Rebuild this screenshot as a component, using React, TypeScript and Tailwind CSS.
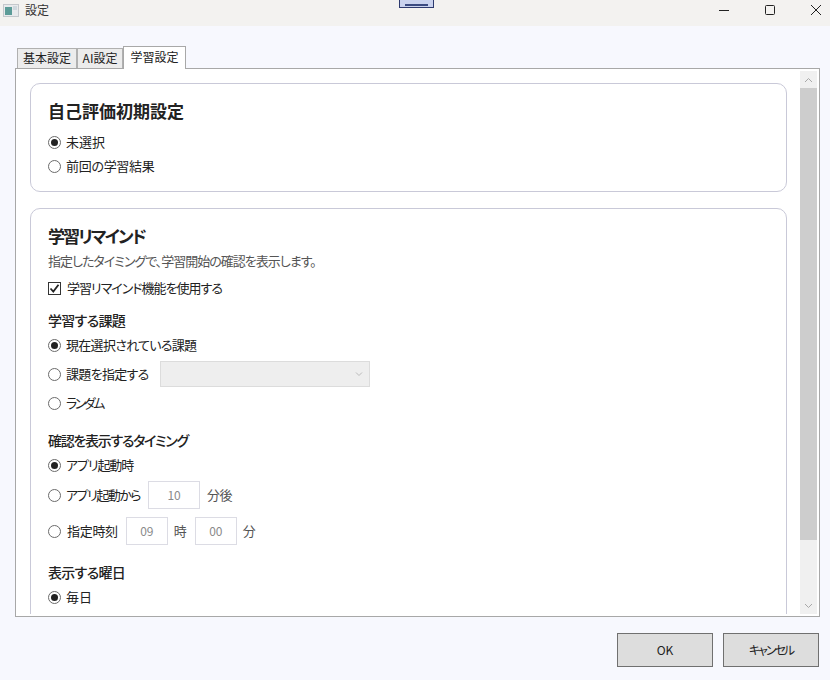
import React from 'react';

const font = { fontFamily: '"Noto Sans CJK JP", "Noto Sans", sans-serif' };

function Radio({ checked = false }: { checked?: boolean }) {
  return (
    <span className="flex h-[13px] w-[13px] shrink-0 items-center justify-center rounded-full border border-[#6b6b6b] bg-white">
      {checked && <span className="h-[7px] w-[7px] rounded-full bg-[#222]" />}
    </span>
  );
}

function Box({ value, w }: { value: string; w: string }) {
  return (
    <span className={`flex h-[28px] items-center justify-center border border-[#dcdce4] bg-white text-[12px] text-[#8a8a8a] ${w}`}>
      {value}
    </span>
  );
}

function Tab({ label, active = false, w }: { label: string; active?: boolean; w: string }) {
  return active ? (
    <div className={`relative z-10 -mb-px flex h-[23px] items-center justify-center border border-b-0 border-[#a8a8a8] bg-white pb-[2px] text-[12px] text-[#222] ${w}`}>
      {label}
    </div>
  ) : (
    <div className={`flex h-[20px] items-center justify-center border border-b-0 border-[#b0b0b0] bg-[#ececec] pb-[1px] text-[12px] text-[#222] ${w}`}>
      {label}
    </div>
  );
}

export default function App() {
  return (
    <div className="relative flex h-[680px] w-[830px] flex-col overflow-hidden bg-[#f7f8fe] text-[#222] [font-feature-settings:'palt']" style={font}>
      {/* Title bar */}
      <div className="flex h-[26px] shrink-0 items-center bg-[#f3f2f0] pb-[6px] pl-[3px] pr-[8px]">
        <svg width="16" height="13" viewBox="0 0 16 13" className="shrink-0">
          <rect x="0.5" y="0.5" width="15" height="12" fill="#e8eaec" stroke="#c4c8cc" />
          <rect x="2" y="3" width="7" height="8" fill="#5c9c98" />
          <rect x="10" y="2" width="4" height="4" fill="#cfd8de" />
        </svg>
        <span className="ml-[6px] text-[12px] text-[#333]">設定</span>
        <div className="ml-auto flex items-center gap-[34px]">
          <svg width="12" height="12" viewBox="0 0 12 12"><path d="M1 6.5h10" stroke="#222" strokeWidth="1" /></svg>
          <svg width="12" height="12" viewBox="0 0 12 12" fill="none"><rect x="1.5" y="1.5" width="9" height="9" rx="1" stroke="#222" /></svg>
          <svg width="12" height="12" viewBox="0 0 12 12" fill="none"><path d="M1 1l10 10M11 1L1 11" stroke="#222" /></svg>
        </div>
      </div>

      {/* Window sliver at top */}
      <div className="absolute left-[399px] top-0 flex h-[8px] w-[35px] items-end border border-t-0 border-[#2d3a6e] bg-[#c9d2ee] px-[5px] pb-[1px]">
        <div className="h-[2px] w-full bg-[#3a4a80]" />
      </div>

      {/* Tabs */}
      <div className="mt-[20px] flex items-end pl-[17px]">
        <Tab label="基本設定" w="w-[60px]" />
        <Tab label="AI設定" w="w-[46px]" />
        <Tab label="学習設定" active w="w-[63px]" />
      </div>

      {/* Panel */}
      <div className="mx-[15px] flex h-[549px] w-[805px] border border-[#a8a8a8] bg-white pb-[2px] pl-[14px] pr-[2px] pt-[2px]">
        <div className="flex min-w-0 flex-1 flex-col gap-[16px] overflow-hidden pt-[12px]">
          <section className="h-[109px] w-[757px] shrink-0 rounded-[10px] border border-[#c9c9d8] px-[17px] pt-[15px]">
            <h2 className="text-[17px] font-bold leading-[24px] text-[#222]">自己評価初期設定</h2>
            <div className="mt-[7px] flex items-center gap-[5px] text-[13px] leading-[24px]"><Radio checked />未選択</div>
            <div className="flex items-center gap-[5px] text-[13px] leading-[24px] tracking-[-0.3px]"><Radio />前回の学習結果</div>
          </section>

          <section className="w-[757px] shrink-0 rounded-[10px] border border-[#c9c9d8] px-[17px] pt-[15px]">
            <h2 className="text-[17px] font-bold leading-[24px] tracking-[-1.9px]">学習リマインド</h2>
            <p className="mt-[4px] text-[13px] leading-[18px] tracking-[-1px] text-[#555]">指定したタイミングで、学習開始の確認を表示します。</p>
            <div className="mt-[9px] flex h-[18px] items-center gap-[6px] text-[13px] tracking-[-1px]">
              <span className="flex h-[13px] w-[13px] items-center justify-center border border-[#333] bg-white">
                <svg width="11" height="11" viewBox="0 0 11 11" fill="none"><path d="M1.5 5.5l2.8 3L9.5 1.8" stroke="#222" strokeWidth="1.8" /></svg>
              </span>
              学習リマインド機能を使用する
            </div>

            <h3 className="mt-[14px] text-[14px] font-medium leading-[18px] tracking-[-0.7px]">学習する課題</h3>
            <div className="mt-[7px] flex h-[18px] items-center gap-[5px] text-[13px] tracking-[-0.7px]"><Radio checked />現在選択されている課題</div>
            <div className="mt-[7px] flex h-[26px] items-center gap-[5px] text-[13px] tracking-[-0.7px]">
              <Radio />課題を指定する
              <span className="ml-[6px] flex h-[26px] w-[210px] items-center justify-end border border-[#dcdcdc] bg-[#eeeeee] pr-[6px]">
                <svg width="8" height="6" viewBox="0 0 8 6" fill="none"><path d="M1 1.5l3 3 3-3" stroke="#bbb" /></svg>
              </span>
            </div>
            <div className="mt-[7px] flex h-[18px] items-center gap-[5px] text-[13px] tracking-[-2.5px]"><Radio />ランダム</div>

            <h3 className="mt-[19px] text-[14px] font-medium leading-[18px] tracking-[-1.3px]">確認を表示するタイミング</h3>
            <div className="mt-[7px] flex h-[18px] items-center gap-[5px] text-[13px] tracking-[-1.1px]"><Radio checked />アプリ起動時</div>
            <div className="mt-[7px] flex h-[28px] items-center gap-[5px] text-[13px]">
              <Radio />
              <span className="tracking-[-1.5px]">アプリ起動から</span>
              <Box value="10" w="ml-[3px] w-[52px]" />
              <span className="ml-[2px] tracking-[-0.5px] text-[#555]">分後</span>
            </div>
            <div className="mt-[8px] flex h-[28px] items-center gap-[6px] text-[13px]">
              <Radio />
              <span className="tracking-[-0.3px]">指定時刻</span>
              <Box value="09" w="ml-[2px] w-[42px]" />
              <span className="text-[#555]">時</span>
              <Box value="00" w="ml-[2px] w-[42px]" />
              <span className="text-[#555]">分</span>
            </div>

            <h3 className="mt-[18px] text-[14px] font-medium leading-[18px] tracking-[-0.7px]">表示する曜日</h3>
            <div className="mt-[7px] flex h-[18px] items-center gap-[5px] text-[13px]"><Radio checked />毎日</div>
            <div className="h-[40px]" />
          </section>
        </div>

        {/* Scrollbar */}
        <div className="ml-[12px] flex w-[17px] shrink-0 flex-col bg-[#f0f0f0]">
          <div className="flex h-[17px] items-center justify-center">
            <svg width="9" height="6" viewBox="0 0 9 6" fill="none"><path d="M1 5l3.5-3.5L8 5" stroke="#a8a8a8" /></svg>
          </div>
          <div className="h-[452px] bg-[#cdcdcd]" />
          <div className="mt-auto flex h-[17px] items-center justify-center">
            <svg width="9" height="6" viewBox="0 0 9 6" fill="none"><path d="M1 1l3.5 3.5L8 1" stroke="#a8a8a8" /></svg>
          </div>
        </div>
      </div>

      {/* Footer buttons */}
      <div className="mt-[16px] flex justify-end gap-[10px] pr-[11px]">
        <button className="h-[34px] w-[96px] border border-[#707070] bg-[#dddddd] text-[12px] text-[#222]">OK</button>
        <button className="h-[34px] w-[96px] border border-[#707070] bg-[#dddddd] text-[12px] tracking-[-2px] text-[#222]">キャンセル</button>
      </div>
    </div>
  );
}
